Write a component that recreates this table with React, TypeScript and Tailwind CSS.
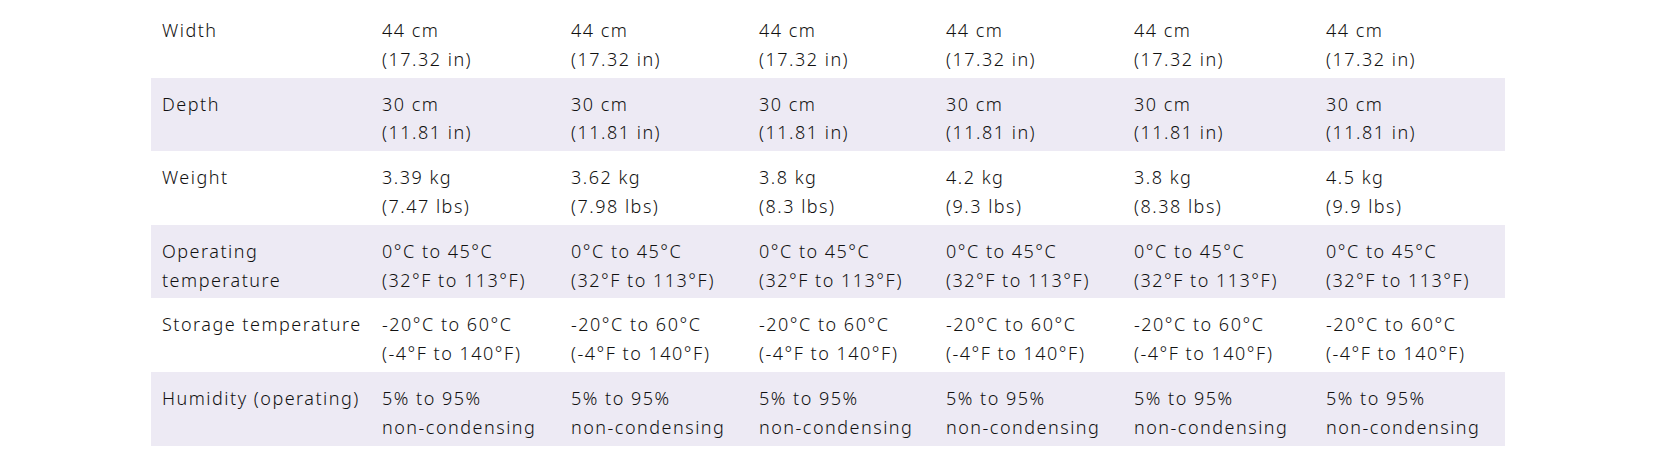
import React from 'react';

interface SpecRow {
  label: string;
  values: [string, string][];
}

const repeat = (a: string, b: string): [string, string][] => Array.from({ length: 6 }, () => [a, b] as [string, string]);

const rows: SpecRow[] = [
  { label: 'Width', values: repeat('44 cm', '(17.32 in)') },
  { label: 'Depth', values: repeat('30 cm', '(11.81 in)') },
  {
    label: 'Weight',
    values: [
      ['3.39 kg', '(7.47 lbs)'],
      ['3.62 kg', '(7.98 lbs)'],
      ['3.8 kg', '(8.3 lbs)'],
      ['4.2 kg', '(9.3 lbs)'],
      ['3.8 kg', '(8.38 lbs)'],
      ['4.5 kg', '(9.9 lbs)'],
    ],
  },
  { label: 'Operating temperature', values: repeat('0°C to 45°C', '(32°F to 113°F)') },
  { label: 'Storage temperature', values: repeat('-20°C to 60°C', '(-4°F to 140°F)') },
  { label: 'Humidity (operating)', values: repeat('5% to 95%', 'non-condensing') },
];

const App: React.FC = () => {
  return (
    <div className="w-[1654px] h-[456px] bg-white pt-[4px] pl-[151px] text-[18px] leading-[28.8px] font-light tracking-[1.5px] text-[#111] font-['Noto_Sans',sans-serif]">
      <table className="table-fixed w-[1354px] border-collapse">
        <colgroup>
          <col className="w-[220px]" />
          <col className="w-[189px]" />
          <col className="w-[188px]" />
          <col className="w-[187px]" />
          <col className="w-[188px]" />
          <col className="w-[192px]" />
          <col className="w-[190px]" />
        </colgroup>
        <tbody>
          {rows.map((row, i) => (
            <tr key={row.label} className={i % 2 === 1 ? 'bg-[#edeaf4]' : ''}>
              <td className="align-top pl-[11px] pr-1 pt-3 pb-[4px] whitespace-nowrap">
                {row.label === 'Operating temperature' ? (
                  <>
                    Operating
                    <br />
                    temperature
                  </>
                ) : (
                  row.label
                )}
              </td>
              {row.values.map(([a, b], j) => (
                <td key={j} className="align-top pl-[11px] pr-1 pt-3 pb-[4px] whitespace-nowrap">
                  <div>{a}</div>
                  <div>{b}</div>
                </td>
              ))}
            </tr>
          ))}
        </tbody>
      </table>
    </div>
  );
};

export default App;
